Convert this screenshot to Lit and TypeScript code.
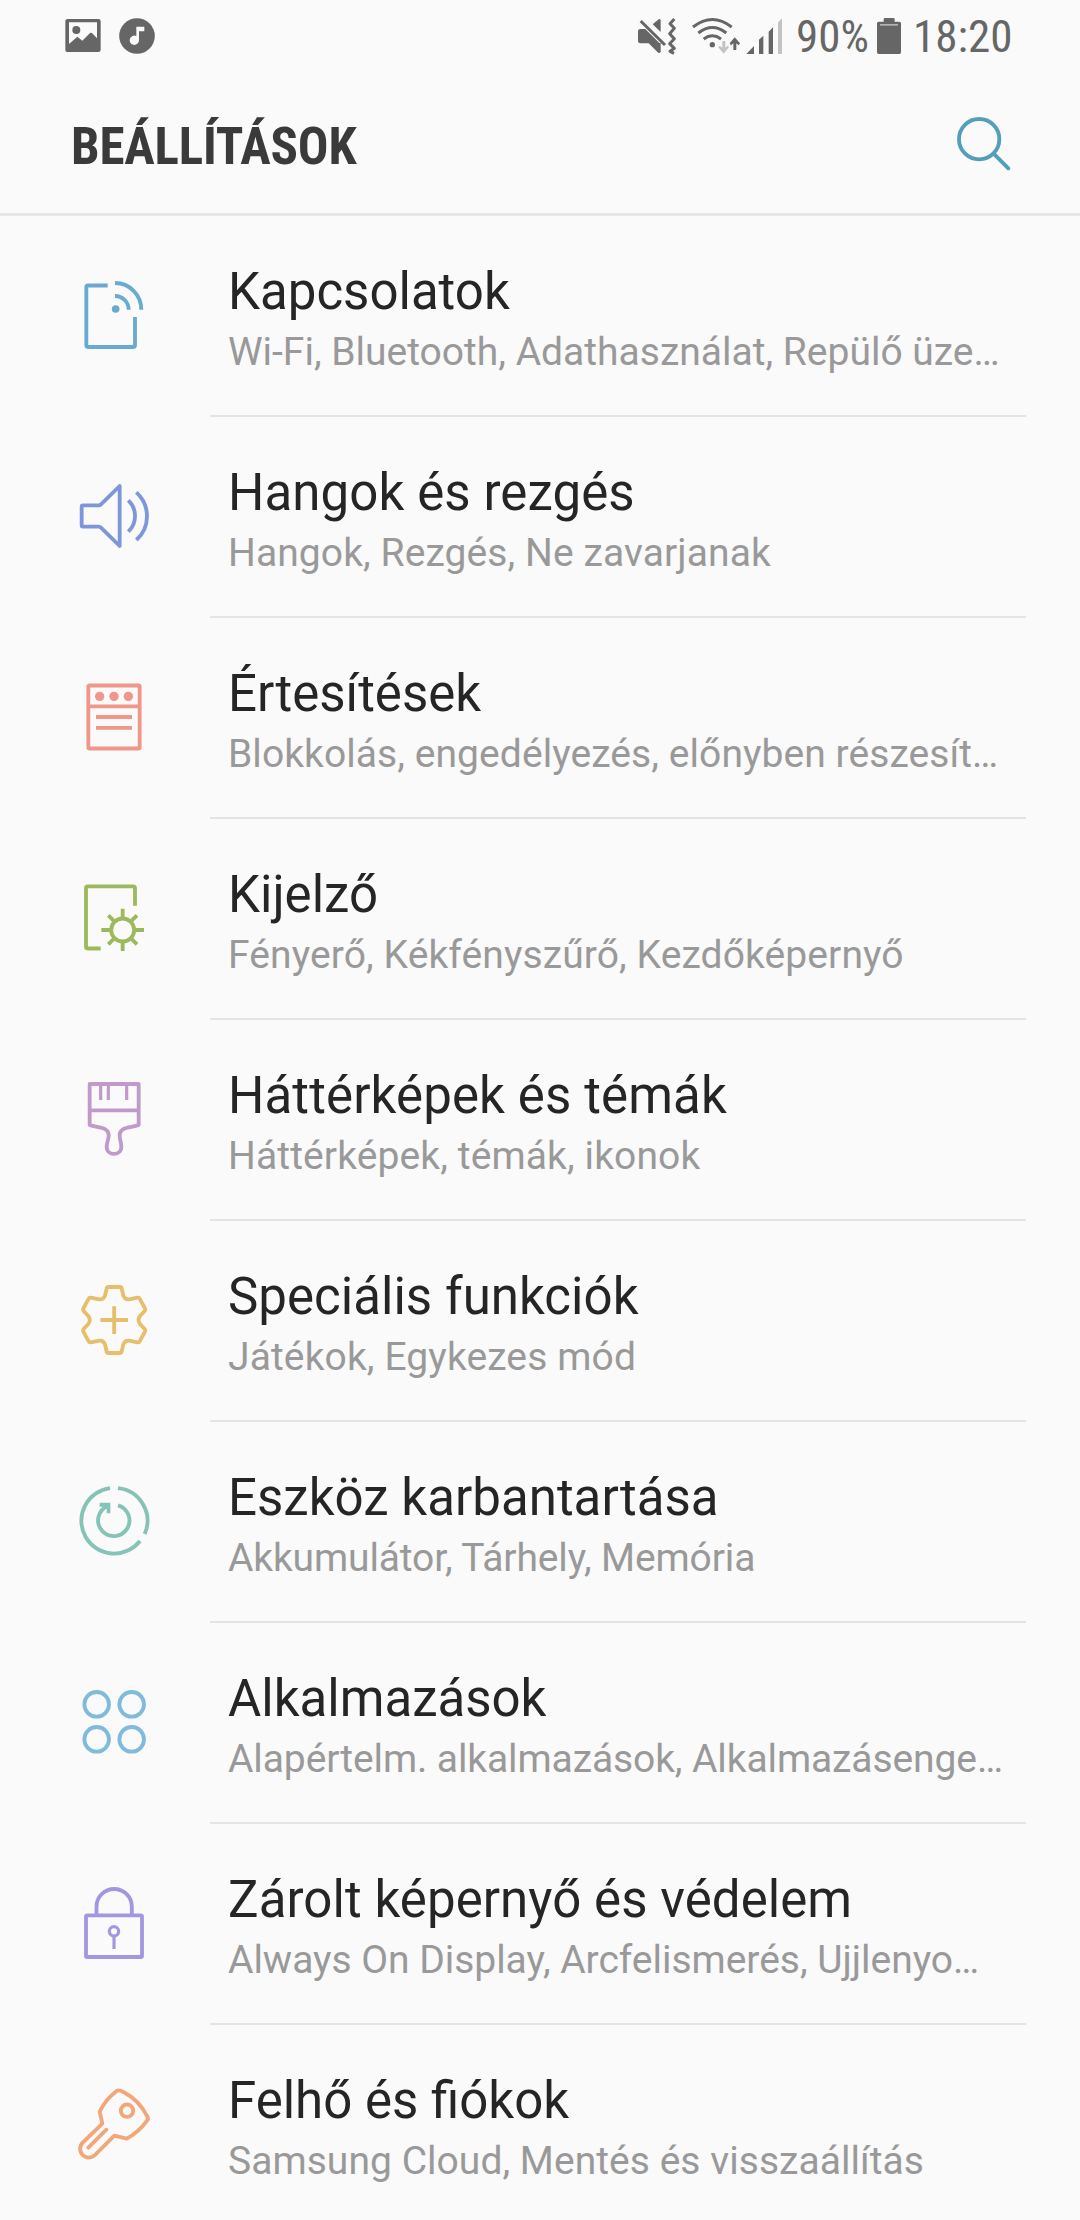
import { LitElement, html, svg, css, type SVGTemplateResult } from "lit";
import { customElement } from "lit/decorators.js";

interface SettingsItem {
  title: string;
  summary: string;
  color: string;
  top: number; // first visible unit of the icon's drawing area
  tracking: [number, number]; // letter spacing of title and summary, px
  icon: SVGTemplateResult;
}

const items: SettingsItem[] = [
  {
    title: "Kapcsolatok",
    summary: "Wi-Fi, Bluetooth, Adathasználat, Repülő üze…",
    color: "#68aad2",
    top: 27,
    tracking: [0, 0],
    icon: svg`
      <path d="M143 106.5H84q-5 0-5 5V286q0 5 5 5H220q5 0 5-5V201"/>
      <path d="M165 99A79 80 0 0 1 244 179M165 138A41 41 0 0 1 206 179"/>
      <circle class="solid" cx="167" cy="177" r="11.5"/>`,
  },
  {
    title: "Hangok és rezgés",
    summary: "Hangok, Rezgés, Ne zavarjanak",
    color: "#8096da",
    top: 0,
    tracking: [0.09, 0.09],
    icon: svg`
      <path d="M179 78L123 133Q120 136 116 136H69q-4 0-4 4V196q0 4 4 4H116Q120 200 123 203L179 258Z"/>
      <path d="M205 121A65 65 0 0 1 205 215M229 97A96 96 0 0 1 229 240"/>`,
  },
  {
    title: "Értesítések",
    summary: "Blokkolás, engedélyezés, előnyben részesít…",
    color: "#f0968b",
    top: 3,
    tracking: [0, 0.07],
    icon: svg`
      <rect x="85" y="76.5" width="154" height="189" rx="4"/>
      <path d="M85 139H239M108 171H216M108 203.5H216"/>
      <circle class="solid" cx="119" cy="109" r="14"/>
      <circle class="solid" cx="162" cy="109" r="14"/>
      <circle class="solid" cx="205" cy="109" r="14"/>`,
  },
  {
    title: "Kijelző",
    summary: "Fényerő, Kékfényszűrő, Kezdőképernyő",
    color: "#9cba5c",
    top: 6,
    tracking: [0, 0.1],
    icon: svg`
      <path d="M122 265.5H83q-5 0-5-5V84q0-5 5-5H220q5 0 5 5V137"/>
      <circle cx="188" cy="210" r="34.5"/>
      <path d="M188 146V173M188 247V273M124 210H151M225 210H252M145 166L164 185M231 166L212 185M145 253L164 234M231 253L212 234"/>`,
  },
  {
    title: "Háttérképek és témák",
    summary: "Háttérképek, témák, ikonok",
    color: "#c09acb",
    top: -6,
    tracking: [0.12, 0.12],
    icon: svg`
      <path d="M89 57H236V180C214 189 179 184 179 211C179 226 184 232 184 245C184 274 140 274 140 245C140 232 146 226 146 211C146 184 111 189 89 180Z"/>
      <path d="M89 136H236"/>
      <path class="thin" d="M122 57V105M145 57V105M200 57V105"/>`,
  },
  {
    title: "Speciális funkciók",
    summary: "Játékok, Egykezes mód",
    color: "#e7bf6b",
    top: -3,
    tracking: [0.03, 0.12],
    icon: svg`
      <path d="M145 66H180Q184 66 185 70L190 92Q195 105 208 103L232 98Q237 97 239 101L255 130Q257 134 254 138L240 153Q231 165 240 177L254 192Q257 196 255 200L239 229Q237 233 232 232L208 227Q195 225 190 238L185 260Q184 264 180 264H145Q141 264 140 260L135 238Q130 225 117 227L93 232Q88 233 86 229L70 200Q68 196 71 192L85 177Q94 165 85 153L71 138Q68 134 70 130L86 101Q88 97 93 98L117 103Q130 105 135 92L140 70Q141 66 145 66Z"/>
      <path d="M121 165H204M162.500 124V207"/>`,
  },
  {
    title: "Eszköz karbantartása",
    summary: "Akkumulátor, Tárhely, Memória",
    color: "#84c3b6",
    top: 0,
    tracking: [0.03, -0.13],
    icon: svg`
      <path d="M174 69.500A98.500 98.500 0 0 1 254 207M240 228A98.500 98.500 0 1 1 150 69.500"/>
      <path d="M174 121A47 47 0 1 1 143 123"/>
      <path class="solid" d="M119 113H151V145H140V132L133 125H119Z"/>`,
  },
  {
    title: "Alkalmazások",
    summary: "Alapértelm. alkalmazások, Alkalmazásenge…",
    color: "#81bbdb",
    top: -12,
    tracking: [0, -0.1],
    icon: svg`
      <circle cx="110" cy="103" r="37"/>
      <circle cx="215" cy="103" r="37"/>
      <circle cx="110" cy="208" r="37"/>
      <circle cx="215" cy="208" r="37"/>`,
  },
  {
    title: "Zárolt képernyő és védelem",
    summary: "Always On Display, Arcfelismerés, Ujjlenyo…",
    color: "#a597df",
    top: -9,
    tracking: [0.07, -0.03],
    icon: svg`
      <rect x="78" y="136" width="168" height="125" rx="4"/>
      <path d="M109.500 133V110A53 53 0 0 1 215.500 110V133"/>
      <circle class="thin" cx="162" cy="184" r="14"/>
      <path class="thin" d="M162 200V237"/>`,
  },
  {
    title: "Felhő és fiókok",
    summary: "Samsung Cloud, Mentés és visszaállítás",
    color: "#f2a679",
    top: -6,
    tracking: [0, 0.04],
    icon: svg`
      <path d="M176 61Q182 61 190 66Q236 89 262 139Q266 147 261 152Q236 187 200 206L163 197L105 255A26 26 0 0 1 68 218L127 161L119 125Q137 88 170 63Q173 61 176 61Z"/>
      <circle cx="201" cy="122" r="18.500"/>
      <path stroke-linecap="round" d="M85 233L139 179"/>`,
  },
];

@customElement("status-bar")
class StatusBar extends LitElement {
  static styles = css`
    :host {
      display: flex;
      height: 72px;
      color: #666;
      font-family: "Roboto Condensed", Roboto, sans-serif;
      font-stretch: 75%;
      font-size: 45px;
      line-height: 74px;
      justify-content: space-between;
      padding: 0 68px 0 60px;
      box-sizing: border-box;
    }
    .group {
      display: flex;
      white-space: nowrap;
    }
    svg {
      display: block;
      flex: none;
    }
    .percent {
      margin-left: 12px;
      width: 72px;
    }
    .battery {
      margin-left: 9px;
    }
    .time {
      margin-left: 12px;
      width: 99px;
    }
  `;

  render() {
    return html`
      <div class="group">
        <svg width="110" height="72" viewBox="60 0 330 216" fill="#666">
          <path fill-rule="evenodd" d="M84 57H175Q182 57 182 64V149Q182 156 175 156H84Q76 156 76 149V64Q76 57 84 57ZM87 67V132L112 110L127 122L150 99Q153 97 156 99L171 115V67Z"/>
          <circle cx="109" cy="90" r="12"/>
          <circle cx="291" cy="108" r="53.500"/>
          <path fill="#fafafa" d="M289 80H313V94H297V121A14 14 0 1 1 289 108Z"/>
        </svg>
      </div>
      <div class="group">
        <svg width="152" height="72" viewBox="36 0 456 216" fill="#666">
          <path d="M54 94Q54 87 61 87H76L118 129H122V156Q118 161 113 157L86 130H61Q54 130 54 123ZM98 73L116 58Q122 55 122 62V96Z"/>
          <path fill="none" stroke="#666" stroke-width="9" d="M62 63L135 135"/>
          <path fill="none" stroke="#666" stroke-width="9" stroke-linejoin="round" d="M163 57L150 71L163 85L149 101L163 116L149 131L163 145L150 154L162 160"/>
          <path fill="none" stroke="#666" stroke-width="9" d="M219 81Q277 36 335 81M235 99Q277 66 319 99M251 117Q277 98 303 117"/>
          <circle cx="277" cy="134" r="8"/>
          <path fill="#c3c3c3" d="M307 123H316V143L323 137L327 142L311 161L295 142L299 137L307 143Z"/>
          <path d="M340 150V130L333 136L329 130L344 112L360 130L356 136L349 130V150Z"/>
          <path d="M379 162L402 138V162ZM417 119L430 107V162H417ZM446 95L459 82V162H446Z"/>
          <path fill="#c3c3c3" d="M474 67L486 55V162H474Z"/>
        </svg>
        <span class="percent">90%</span>
        <svg class="battery" width="24" height="72" viewBox="771 0 72 216" fill="#666">
          <path d="M791 65V58Q791 54 795 54H820Q824 54 824 58V65H838Q843 65 843 70V157Q843 162 838 162H776Q771 162 771 157V70Q771 65 776 65Z"/>
          <path fill="#b4b4b4" d="M780 72H834V77H780Z"/>
        </svg>
        <span class="time">18:20</span>
      </div>
    `;
  }
}

@customElement("settings-row")
class SettingsRow extends LitElement {
  static properties = { item: { attribute: false } };
  declare item: SettingsItem;

  static styles = css`
    :host {
      display: flex;
      height: 201px;
      box-sizing: border-box;
      padding-left: 60px;
    }
    svg {
      display: block;
      flex: none;
      margin-top: 43px;
      fill: none;
      stroke: currentColor;
      stroke-width: 11.5;
      stroke-linejoin: round;
      overflow: visible;
    }
    .solid {
      fill: currentColor;
      stroke: none;
    }
    .thin {
      stroke-width: 9.5;
    }
    .body {
      box-sizing: border-box;
      width: 816px;
      margin-left: 40px;
      padding: 46px 0 0 18px;
      border-bottom: 2px solid #e4e4e4;
      white-space: nowrap;
    }
    .title {
      font-size: 51px;
      line-height: 60px;
      color: #252525;
    }
    .summary {
      margin-top: 7px;
      font-size: 39px;
      line-height: 46px;
      color: #999;
    }
  `;

  render() {
    const { title, summary, color, top, tracking, icon } = this.item;
    return html`
      <svg width="110" height="110" viewBox="0 ${top} 330 330" style="color:${color}">${icon}</svg>
      <div class="body">
        <div class="title" style="letter-spacing:${tracking[0]}px">${title}</div>
        <div class="summary" style="letter-spacing:${tracking[1]}px">${summary}</div>
      </div>
    `;
  }
}

@customElement("app-root")
class AppRoot extends LitElement {
  static styles = css`
    :host {
      display: block;
      width: 1080px;
      height: 2220px;
      overflow: hidden;
      background: #fafafa;
      font-family: Roboto, sans-serif;
    }
    .header {
      display: flex;
      justify-content: space-between;
      height: 144px;
      box-sizing: border-box;
      border-bottom: 3px solid #e6e6e6;
      padding: 0 66px 0 71px;
    }
    .heading {
      margin: 0;
      padding-top: 45px;
      font-family: "Roboto Condensed", Roboto, sans-serif;
      font-stretch: 75%;
      font-weight: 700;
      font-size: 51px;
      line-height: 60px;
      letter-spacing: -0.2px;
      color: #3a3a3a;
    }
    .search {
      display: block;
      margin-top: 42px;
    }
  `;

  render() {
    return html`
      <status-bar></status-bar>
      <div class="header">
        <h1 class="heading">BEÁLLÍTÁSOK</h1>
        <svg class="search" width="60" height="60" viewBox="1002 342 180 180" fill="none" stroke="#529fbc" stroke-width="11.500">
          <circle cx="1077.500" cy="417.500" r="60.500"/>
          <path stroke-linecap="round" d="M1121 461L1165 505"/>
        </svg>
      </div>
      ${items.map((item) => html`<settings-row .item=${item}></settings-row>`)}
    `;
  }
}
